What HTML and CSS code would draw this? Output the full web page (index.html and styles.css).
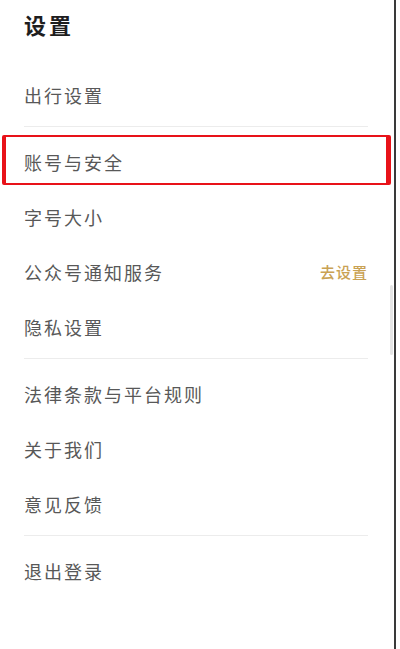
FILE: index.html
```html
<!DOCTYPE html>
<html lang="zh">
<head>
<meta charset="utf-8">
<link rel="stylesheet" href="styles.css">
</head>
<body>
<div class="screen">
  <h1 class="title">设置</h1>
  <div class="group">
    <div class="item">出行设置</div>
  </div>
  <div class="divider"></div>
  <div class="group">
    <div class="item">账号与安全</div>
    <div class="item">字号大小</div>
    <div class="item"><span>公众号通知服务</span><span class="action">去设置</span></div>
    <div class="item">隐私设置</div>
  </div>
  <div class="divider"></div>
  <div class="group">
    <div class="item">法律条款与平台规则</div>
    <div class="item">关于我们</div>
    <div class="item">意见反馈</div>
  </div>
  <div class="divider"></div>
  <div class="group">
    <div class="item">退出登录</div>
  </div>
  <div class="highlight"></div>
  <div class="thumb"></div>
</div>
</body>
</html>
```

FILE: styles.css
```css
html, body {
  margin: 0;
  padding: 0;
  background: #fff;
}
body {
  font-family: "Noto Sans CJK SC", "Noto Sans", sans-serif;
}
.screen {
  position: relative;
  width: 396px;
  height: 649px;
  border-right: 2px solid #3a3a3a;
  box-sizing: border-box;
  padding: 6px 26px 0 24px;
  overflow: hidden;
  background: #fff;
}
.title {
  margin: 0 0 26px;
  font-size: 22px;
  line-height: 36px;
  font-weight: 700;
  letter-spacing: 3px;
  color: #1e1e1e;
}
.group {
  display: flex;
  flex-direction: column;
}
.item {
  height: 55px;
  display: flex;
  align-items: center;
  justify-content: space-between;
  font-size: 18px;
  letter-spacing: 2px;
  color: #585858;
}
.group:first-of-type .item {
  height: 54px;
}
.action {
  font-size: 15px;
  letter-spacing: 1px;
  color: #c9a254;
  font-weight: 500;
}
.divider {
  height: 1px;
  background: #ececec;
  margin: 4px 0 7px;
}
.highlight {
  position: absolute;
  left: 2px;
  top: 135px;
  width: 389px;
  height: 50px;
  box-sizing: border-box;
  border: 2px solid #e81219;
  border-left-width: 4px;
  border-right-width: 5px;
  border-radius: 2px;
}
.thumb {
  position: absolute;
  left: 390px;
  top: 285px;
  width: 3px;
  height: 70px;
  border-radius: 2px;
  background: #e4e4e4;
}
```
